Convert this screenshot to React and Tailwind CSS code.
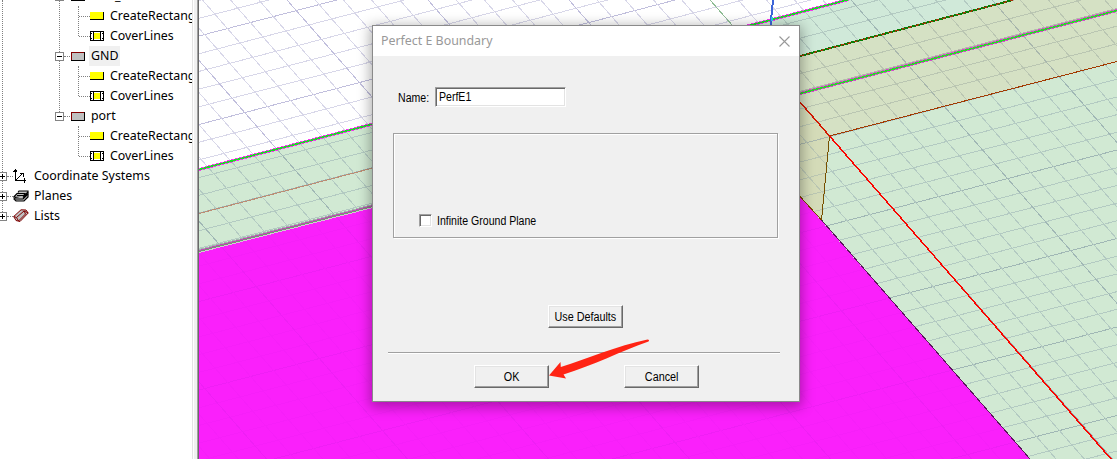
const A_LINES = Array.from({ length: 52 }, (_, i) => i - 6)
const B_LINES = Array.from({ length: 58 }, (_, i) => i - 20)

function Grid({ minor, major, clip }) {
  const line = (key, strong, x1, y1, x2, y2) => (
    <line key={key} x1={x1} y1={y1} x2={x2} y2={y2} stroke={strong ? major : minor} />
  )
  const ordered = (list) => [...list.filter((n) => n % 5 !== 0), ...list.filter((n) => n % 5 === 0)]
  return (
    <g clipPath={clip}>
      {ordered(A_LINES).map((n) =>
        line('a' + n, n % 5 === 0, 199, 36 + 17.7 * n, 1117, 36 + 17.7 * n - 240)
      )}
      {ordered(B_LINES).map((n) =>
        line('b' + n, n % 5 === 0, 146 + 28.2 * n, 0, 146 + 28.2 * n + 402.5, 459)
      )}
    </g>
  )
}

function Viewport() {
  return (
    <svg
      className="absolute left-0 top-0 h-[459px] w-[1117px]"
      viewBox="0 0 1117 459"
      shapeRendering="crispEdges"
      fill="none"
    >
      <defs>
        <clipPath id="air">
          <path d="M199 0H849L199 169Z" />
        </clipPath>
        <clipPath id="box">
          <path d="M199 169L849 -1H1117V459H1030L800 196L373 207L199 252Z" />
        </clipPath>
        <clipPath id="olive">
          <path d="M800 56L1013 0H1117V61L829 136L822 220L800 196Z" />
        </clipPath>
        <clipPath id="pink">
          <path d="M199 253L373 208L600 150L800 196.500L1030 459H199Z" />
        </clipPath>
      </defs>
      <path d="M199 0H1117V459H199Z" fill="#fff" />
      <path d="M199 169L849 -1H1117V459H199Z" fill="#d1e9d3" />
      <path d="M743 27L849 -1H1013L800 56V100H743Z" fill="#d0e9d9" />
      <path d="M800 56L1013 0H1117V61L829 136L822 220L800 196Z" fill="#d5e1c4" />
      <path d="M800 102L829 136L822 220L800 196Z" fill="#d4dbb8" />
      <Grid minor="#d8d7e9" major="#c1bfdd" clip="url(#air)" />
      <Grid minor="#b3cac2" major="#a0b7b5" clip="url(#box)" />
      <path d="M800 56L1013 0H1117V61L829 136L822 220L800 196Z" fill="#d5e1c4" />
      <path d="M800 102L829 136L822 220L800 196Z" fill="#d4dbb8" />
      <Grid minor="#bac6b2" major="#a9b7ad" clip="url(#olive)" />
      <path d="M199 253L373 208L600 150L800 196.500L1030 459H199Z" fill="#fa20fb" />
      <Grid minor="#f61ff9" major="#ef1ff5" clip="url(#pink)" />
      <path d="M710 0L733 26" stroke="#8fbd95" />
      <path d="M199 213.500L373 168" stroke="#bd8c73" />
      <path d="M199 169.500L849 -.5" stroke="#f33bec" strokeWidth="3" />
      <path d="M199 169.500L849 -.5" stroke="#17dd23" strokeWidth="1.500" />
      <path d="M199 249.500L373 204.500" stroke="#a3b5ad" />
      <path d="M199 250.500L373 205.500" stroke="#c04ab5" />
      <path d="M199 251.500L373 206.500" stroke="#6f9c70" />
      <path d="M199 252.500L373 207.500" stroke="#d8c2d6" />
      <path d="M800 56L1013 0" stroke="#078007" strokeWidth="2" />
      <path d="M800 56L1013 0" stroke="#a53406" strokeDasharray="4 3" strokeWidth="1.200" />
      <path d="M800 92L1117 9" stroke="#b5b8ab" strokeWidth="2" />
      <path d="M800 93.500L1117 10.500" stroke="#d64bcd" strokeWidth="3" />
      <path d="M800 93.500L1117 10.500" stroke="#25dc25" strokeWidth="1.500" />
      <path d="M829.500 136L1117 61.500" stroke="#a23900" />
      <path d="M829.500 136L821.500 220" stroke="#775000" />
      <path d="M800 196.500L821.500 220" stroke="#7c4300" />
      <path d="M821.500 220L1030 459" stroke="#5b175c" />
      <path d="M800 102L829.500 136" stroke="#d31900" strokeWidth="1.500" />
      <path d="M829.500 136L1111 459" stroke="#fa0500" strokeWidth="1.500" />
      <path d="M773 0L770.500 26" stroke="#3d65d8" strokeWidth="2" />
      <path d="M771.500 17V21" stroke="#32c6f0" strokeWidth="2" />
    </svg>
  )
}

function Expander({ plus }) {
  return (
    <svg className="size-[9px] shrink-0" viewBox="0 0 9 9" shapeRendering="crispEdges">
      <rect x=".5" y=".5" width="8" height="8" fill="#fff" stroke="#848484" />
      <path d={plus ? 'M2 4.500H7M4.500 2V7' : 'M2 4.500H7'} stroke="#000" />
    </svg>
  )
}

function Icon({ kind }) {
  if (kind === 'sheet')
    return (
      <svg className="h-[9px] w-[14px] shrink-0" viewBox="0 0 14 9" shapeRendering="crispEdges">
        <rect width="14" height="9" fill="#000" />
        <rect width="13" height="8" fill="#800000" />
        <rect x="1" y="1" width="12" height="7" fill="#c0c0c0" />
      </svg>
    )
  if (kind === 'rect')
    return (
      <svg className="h-[8px] w-[14px] shrink-0" viewBox="0 0 14 8" shapeRendering="crispEdges">
        <rect width="14" height="8" fill="#000" />
        <rect width="13" height="7" fill="#ff0" />
      </svg>
    )
  if (kind === 'cover')
    return (
      <svg className="h-[10px] w-[14px] shrink-0" viewBox="0 0 14 10" shapeRendering="crispEdges">
        <rect width="14" height="10" fill="#000" />
        <path d="M1 1H3V9H1ZM11 1H13V9H11ZM4 1H10V2H4ZM4 8H10V9H4Z" fill="#fff" />
        <path d="M1 2H2V3H1ZM12 2H13V3H12ZM1 7H2V8H1ZM12 7H13V8H12Z" fill="#000" />
        <rect x="4" y="2" width="6" height="6" fill="#ff0" />
      </svg>
    )
  if (kind === 'axes')
    return (
      <svg className="h-[14px] w-[14px] shrink-0" viewBox="0 0 14 14" shapeRendering="crispEdges" fill="none" stroke="#000">
        <path d="M2.500 0V11.500H13M0 2.500H4M1 1.500H4M11.500 9V14M3 11L10 4M7 4.500H10.500V8" />
      </svg>
    )
  if (kind === 'planes')
    return (
      <svg className="h-[12px] w-[16px] shrink-0" viewBox="0 0 16 12" fill="#c0c0c0" stroke="#000" strokeWidth="1.200">
        <path d="M5 2.500L6 1H15V7L11 11H3L1 9L3 7" />
        <path d="M.8 7L4 3.500H12L9.500 7.500Z" />
        <path d="M4 5.500H12M1 9H10L15 4M10 7.500L15 2" />
      </svg>
    )
  return (
    <svg className="h-[14px] w-[16px] shrink-0" viewBox="0 0 16 14" fill="#c0c0c0" stroke="#800000">
      <path d="M.7 7.500L8 .8L13 1L15.200 4L7 12.500L3 11.500Z" />
      <path d="M3.500 8.500L11 2L12.500 5L5.500 12ZM.7 7.500L3.500 8.500M11 2L15.200 4" fill="none" />
    </svg>
  )
}

function Leaf({ kind, label }) {
  return (
    <div className="flex h-5 items-center pl-[79px]">
      <div className="h-0 w-[11px] shrink-0 border-t border-dotted border-[#808080]" />
      <Icon kind={kind} />
      <span className="ml-[6px] whitespace-nowrap">{label}</span>
    </div>
  )
}

function Group({ label, selected }) {
  return (
    <div className="flex h-5 items-center pl-[55px]">
      <Expander />
      <div className="mr-px h-0 w-[6px] border-t border-dotted border-[#808080]" />
      <Icon kind="sheet" />
      <span className={selected ? 'ml-[4px] bg-[#f0f0f0] px-[2px]' : 'ml-[4px] px-[2px]'}>{label}</span>
    </div>
  )
}

function Root({ kind, label }) {
  return (
    <div className="flex h-5 items-center">
      <div className="-ml-[2px] flex w-[36px] shrink-0 items-center">
        <Expander plus />
        <div className="h-0 w-[6px] shrink-0 border-t border-dotted border-[#808080]" />
        <Icon kind={kind} />
      </div>
      <span>{label}</span>
    </div>
  )
}

function Sidebar() {
  return (
    <aside className="flex h-full w-[199px] shrink-0 bg-white">
      <div className="relative h-full w-[192px] overflow-hidden font-['Noto_Sans',sans-serif] text-[12.400px] leading-5 text-black">
        <div className="absolute left-[2px] top-0 h-[216px] border-l border-dotted border-[#808080]" />
        <div className="absolute left-[59px] top-0 h-[116px] border-l border-dotted border-[#808080]" />
        <div className="absolute left-[78px] top-[6px] h-[30px] border-l border-dotted border-[#808080]" />
        <div className="absolute left-[78px] top-[66px] h-[30px] border-l border-dotted border-[#808080]" />
        <div className="absolute left-[78px] top-[126px] h-[30px] border-l border-dotted border-[#808080]" />
        <div className="relative -mt-[14px]">
          <Group label={<span className="ml-[24px]">_</span>} />
          <Leaf kind="rect" label="CreateRectangle" />
          <Leaf kind="cover" label="CoverLines" />
          <Group label="GND" selected />
          <Leaf kind="rect" label="CreateRectangle" />
          <Leaf kind="cover" label="CoverLines" />
          <Group label="port" />
          <Leaf kind="rect" label="CreateRectangle" />
          <Leaf kind="cover" label="CoverLines" />
          <Root kind="axes" label="Coordinate Systems" />
          <Root kind="planes" label="Planes" />
          <Root kind="lists" label="Lists" />
        </div>
      </div>
      <div className="w-px bg-[#e3e3e3]" />
      <div className="w-px bg-white" />
      <div className="w-[3px] bg-[#f0f0f0]" />
      <div className="w-px bg-[#a0a0a0]" />
      <div className="w-px bg-[#696969]" />
    </aside>
  )
}

function Button({ children }) {
  return (
    <button className="flex h-[23px] w-[75px] items-center justify-center border border-b-[#696969] border-l-white border-r-[#696969] border-t-white bg-[#f0f0f0] shadow-[inset_-1px_-1px_#a0a0a0,inset_1px_1px_#e3e3e3]">
      <span className="scale-x-[0.9] whitespace-nowrap">{children}</span>
    </button>
  )
}

function Dialog() {
  return (
    <section className="absolute left-[372px] top-[25px] flex h-[377px] w-[428px] flex-col border border-[#8a8a8a] bg-[#f0f0f0] font-['Liberation_Sans',sans-serif] text-[12px] text-black shadow-[0_3px_12px_2px_rgba(0,0,0,0.32)]">
      <header className="flex h-[30px] shrink-0 items-center justify-between bg-white pl-2 pr-[9px]">
        <h1 className="font-['Noto_Sans',sans-serif] text-[12.400px] text-[#999]">Perfect E Boundary</h1>
        <svg className="size-[11px]" viewBox="0 0 11 11" stroke="#999" strokeWidth="1.100">
          <path d="M.5 .5L10.500 10.500M10.500 .5L.5 10.500" />
        </svg>
      </header>
      <div className="mt-[31px] flex h-5 items-center pl-[25px]">
        <label className="mt-px w-[37px] origin-left scale-x-[0.88] whitespace-nowrap">Name:</label>
        <div className="flex h-5 w-[131px] items-center border border-b-white border-l-[#a0a0a0] border-r-white border-t-[#a0a0a0] bg-white pl-[3px] shadow-[inset_1px_1px_#696969,inset_-1px_-1px_#e3e3e3]">
          <span className="origin-left scale-x-[0.88]">PerfE1</span>
        </div>
      </div>
      <div className="ml-[20px] mt-[26px] flex h-[105px] w-[385px] items-end border border-[#a0a0a0] pb-[10px] pl-[25px] shadow-[1px_1px_#fff,inset_1px_1px_#fff]">
        <div className="flex items-center">
          <div className="size-[13px] border border-b-white border-l-[#a0a0a0] border-r-white border-t-[#a0a0a0] bg-white shadow-[inset_1px_1px_#696969,inset_-1px_-1px_#e3e3e3]" />
          <span className="ml-[5px] mt-px origin-left scale-x-[0.88] leading-[12px]">Infinite Ground Plane</span>
        </div>
      </div>
      <div className="mt-[67px] pl-[175px]">
        <Button>Use Defaults</Button>
      </div>
      <div className="ml-[15px] mt-[24px] h-[2px] w-[392px] border-b border-t border-b-white border-t-[#a0a0a0]" />
      <div className="mt-[11px] flex gap-[75px] pl-[101px]">
        <Button>OK</Button>
        <Button>Cancel</Button>
      </div>
    </section>
  )
}

export default function App() {
  return (
    <main className="relative flex h-[459px] w-[1117px] overflow-hidden bg-white">
      <Viewport />
      <div className="relative z-10 h-full">
        <Sidebar />
      </div>
      <Dialog />
      <svg className="absolute left-[548px] top-[338px] h-[42px] w-[102px]" viewBox="548 338 102 42" fill="#ff2414">
        <path d="M549 375.500L560.500 362L560.800 367C590 358 616 346 647.500 339.500Q650 339.800 648.500 341.500C619 352 594 365 563.500 374.500L566 378.500Z" />
      </svg>
    </main>
  )
}
